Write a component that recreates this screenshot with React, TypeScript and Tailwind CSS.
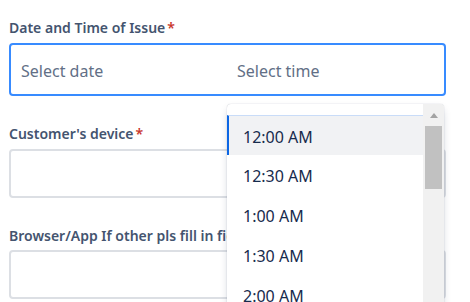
import React from 'react';

// Campos de formulário com o seletor de horário aberto
const times = ['12:00 AM', '12:30 AM', '1:00 AM', '1:30 AM', '2:00 AM'];

function Label({ text, required }: { text: string; required?: boolean }) {
  return (
    <div className="h-[20px] text-[14px] leading-[20px] font-semibold text-[#44546f] whitespace-nowrap">
      {text}
      {required && <span className="ml-[2px] text-[#c9372c]">*</span>}
    </div>
  );
}

export default function App() {
  return (
    <div
      className="relative w-[470px] h-[302px] overflow-hidden bg-white"
      style={{ fontFamily: '"Noto Sans", "Open Sans", sans-serif' }}
    >
      <div className="w-[437px] ml-[9px] pt-[18px] flex flex-col">
        <Label text="Date and Time of Issue" required />
        <div className="mt-[5px] h-[53px] pt-[3px] flex items-center border-2 border-[#388bff] rounded-[4px] text-[16px] text-[#626f86]">
          <div className="w-[216px] pl-[10px]">Select date</div>
          <div className="flex-1 pl-[10px]">Select time</div>
        </div>

        <div className="mt-[28px]">
          <Label text="Customer's device" required />
        </div>
        <div className="mt-[5px] h-[49px] border-2 border-[#dcdfe4] rounded-[4px]" />

        <div className="mt-[28px]">
          <Label text="Browser/App If other pls fill in field below" />
        </div>
        <div className="mt-[4px] h-[49px] border-2 border-[#dcdfe4] rounded-[4px]" />
      </div>

      {/* menu de horários */}
      <div className="absolute left-[227px] top-[104px] w-[217px] h-[220px] flex bg-white rounded-[4px] overflow-hidden shadow-[0_4px_8px_-2px_rgba(9,30,66,0.25),0_0_1px_rgba(9,30,66,0.31)]">
        <div className="flex-1 pt-[11px]">
          {times.map((t, i) => (
            <div
              key={t}
              className={
                i === 0
                  ? 'h-[40px] flex items-center pt-[2px] pl-[14px] border-l-2 border-[#0c66e4] border-t border-t-[#c9dcf8] bg-[#f1f2f4] text-[16px] text-[#172b4d]'
                  : 'h-[40px] flex items-center pt-[2px] pl-[16px] text-[16px] text-[#172b4d]'
              }
            >
              {t}
            </div>
          ))}
        </div>
        <div className="w-[21px] bg-[#f1f1f1] flex flex-col items-center">
          <svg width="8" height="5" viewBox="0 0 8 5" className="mt-[9px]">
            <path d="M0 5 L4 0 L8 5 Z" fill="#a3a3a3" />
          </svg>
          <div className="mt-[8px] w-[17px] h-[63px] bg-[#c1c1c1]" />
        </div>
      </div>
    </div>
  );
}
